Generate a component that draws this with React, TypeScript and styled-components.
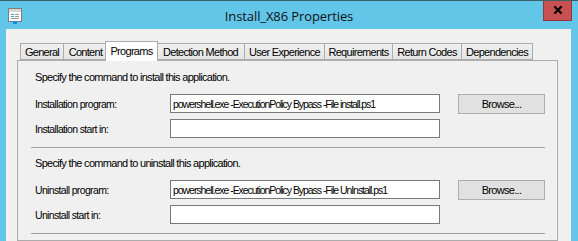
import React from 'react';
import styled, { createGlobalStyle } from 'styled-components';

const GlobalStyle = createGlobalStyle`
  html, body {
    margin: 0;
    padding: 0;
    background: #62c6e9;
  }
  body {
    font-family: 'Liberation Sans', Arial, sans-serif;
    font-size: 11px;
    letter-spacing: -0.7px;
    color: #000;
  }
`;

const Window = styled.div`
  width: 578px;
  height: 241px;
  box-sizing: border-box;
  border-top: 1px solid #3d5f6b;
  background: #62c6e9;
  display: flex;
  flex-direction: column;
  overflow: hidden;
`;

const TitleBar = styled.div`
  height: 28px;
  flex-shrink: 0;
  display: grid;
  grid-template-columns: 1fr auto 1fr;
  align-items: center;
`;

const TitleIcon = styled.div`
  display: flex;
  padding-left: 8px;
  margin-top: 1px;
`;

const Title = styled.div`
  font-family: 'Open Sans', 'Noto Sans', sans-serif;
  font-size: 13px;
  letter-spacing: -0.1px;
  color: #111;
  margin-top: 1px;
`;

const CloseButton = styled.button`
  justify-self: end;
  align-self: start;
  margin-top: -1px;
  margin-right: 6px;
  width: 29px;
  height: 21px;
  padding: 0;
  border: 1px solid #8f3b3b;
  border-top: none;
  background: #c75050;
  display: flex;
  align-items: center;
  justify-content: center;
`;

const Body = styled.div`
  flex: 1;
  margin: 0 7px 0 6px;
  background: #f0f0f0;
  padding: 11px 13px 0 11px;
  display: flex;
  flex-direction: column;
`;

const TabStrip = styled.div`
  display: flex;
  align-items: flex-end;
  height: 20px;
  margin-left: 3px;
  position: relative;
  z-index: 1;
`;

const Tab = styled.div<{ $w: number; $active?: boolean }>`
  box-sizing: border-box;
  width: ${(p) => (p.$active ? p.$w + 4 : p.$w)}px;
  height: ${(p) => (p.$active ? 20 : 17)}px;
  margin: ${(p) => (p.$active ? '0 -2px -1px -2px' : '0')};
  border: 1px solid #acacac;
  border-bottom: ${(p) => (p.$active ? 'none' : '1px solid #acacac')};
  border-right: ${(p) => (p.$active ? '1px solid #acacac' : 'none')};
  background: ${(p) => (p.$active ? '#ffffff' : 'linear-gradient(#f0f0f0, #e5e5e5)')};
  position: relative;
  z-index: ${(p) => (p.$active ? 2 : 1)};
  display: flex;
  align-items: center;
  justify-content: center;
  white-space: nowrap;
  padding-bottom: ${(p) => (p.$active ? 1 : 0)}px;

  &:last-child {
    border-right: 1px solid #acacac;
  }
`;

const Panel = styled.div`
  flex: 1;
  border: 1px solid #acacac;
  background: #f0f0f0;
  padding: 10px 12px 0 13px;
`;

const Section = styled.div<{ $first?: boolean }>`
  padding-top: ${(p) => (p.$first ? 0 : 9)}px;
  border-bottom: 1px solid #a0a0a0;
`;

const Heading = styled.div`
  line-height: 13px;
  margin: 0 0 10px 4px;
`;

const Rows = styled.div`
  display: flex;
  flex-direction: column;
  gap: 6px;
  padding: 0 0 9px 4px;
`;

const Row = styled.div`
  display: flex;
  align-items: center;
  height: 19px;
`;

const Label = styled.div`
  width: 135px;
  flex-shrink: 0;
  font-size: 10.5px;
  letter-spacing: -0.65px;
`;

const TextBox = styled.div`
  box-sizing: border-box;
  width: 270px;
  height: 19px;
  border: 1px solid #7a7a7a;
  background: #fff;
  padding: 0 2px;
  display: flex;
  align-items: center;
  white-space: nowrap;
  overflow: hidden;
  font-size: 10.5px;
  letter-spacing: -1.05px;
`;

const BrowseButton = styled.button`
  box-sizing: border-box;
  width: 87px;
  height: 20px;
  margin-left: 18px;
  border: 1px solid #adadad;
  background: #e1e1e1;
  font-family: inherit;
  font-size: 11px;
  letter-spacing: inherit;
  color: #000;
  padding: 0;
`;

const tabs: [string, number][] = [
  ['General', 43],
  ['Content', 44],
  ['Programs', 49],
  ['Detection Method', 88],
  ['User Experience', 80],
  ['Requirements', 68],
  ['Return Codes', 69],
  ['Dependencies', 72],
];

const PropertiesIcon = () => (
  <svg width="14" height="16" viewBox="0 0 14 16">
    <rect x="0.5" y="0.5" width="13" height="13" fill="#ffffff" stroke="#7d7d7d" />
    <rect x="1" y="1" width="12" height="3" fill="#d6d6d6" />
    <rect x="3" y="6" width="3" height="1" fill="#3aa0e6" />
    <rect x="7" y="6" width="4" height="1" fill="#9a9a9a" />
    <rect x="3" y="8" width="3" height="1" fill="#3aa0e6" />
    <rect x="7" y="8" width="4" height="1" fill="#9a9a9a" />
    <rect x="3" y="10" width="8" height="1" fill="#9a9a9a" />
    <rect x="5" y="13" width="4" height="3" fill="#1e88d8" />
  </svg>
);

const CloseGlyph = () => (
  <svg width="8" height="8" viewBox="0 0 8 8">
    <path d="M1 1 L7 7 M7 1 L1 7" stroke="#000" strokeWidth="2.2" strokeLinecap="square" />
  </svg>
);

interface CommandSectionProps {
  heading: string;
  programLabel: string;
  command: string;
  startLabel: string;
  first?: boolean;
}

const CommandSection: React.FC<CommandSectionProps> = ({ heading, programLabel, command, startLabel, first }) => (
  <Section $first={first}>
    <Heading>{heading}</Heading>
    <Rows>
      <Row>
        <Label>{programLabel}</Label>
        <TextBox>{command}</TextBox>
        <BrowseButton type="button">Browse...</BrowseButton>
      </Row>
      <Row>
        <Label>{startLabel}</Label>
        <TextBox />
      </Row>
    </Rows>
  </Section>
);

export default function App() {
  return (
    <>
      <GlobalStyle />
      <Window>
        <TitleBar>
          <TitleIcon>
            <PropertiesIcon />
          </TitleIcon>
          <Title>Install_X86 Properties</Title>
          <CloseButton type="button">
            <CloseGlyph />
          </CloseButton>
        </TitleBar>
        <Body>
          <TabStrip>
            {tabs.map(([name, w]) => (
              <Tab key={name} $w={w} $active={name === 'Programs'}>
                {name}
              </Tab>
            ))}
          </TabStrip>
          <Panel>
            <CommandSection
              first
              heading="Specify the command to install this application."
              programLabel="Installation program:"
              command="powershell.exe -ExecutionPolicy Bypass -File install.ps1"
              startLabel="Installation start in:"
            />
            <CommandSection
              heading="Specify the command to uninstall this application."
              programLabel="Uninstall program:"
              command="powershell.exe -ExecutionPolicy Bypass -File UnInstall.ps1"
              startLabel="Uninstall start in:"
            />
          </Panel>
        </Body>
      </Window>
    </>
  );
}
